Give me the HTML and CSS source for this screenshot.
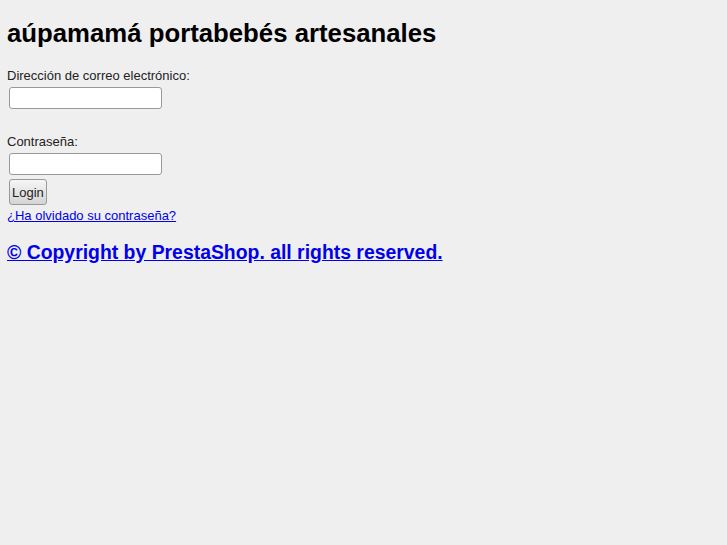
FILE: index.html
```html
<!DOCTYPE html>
<html lang="es">
<head>
  <meta charset="UTF-8">
  <title>aúpamamá portabebés artesanales</title>
  <link rel="stylesheet" href="styles.css">
</head>
<body>
<h1>aúpamamá portabebés artesanales</h1>
<form class="login-form">
  <label for="email">Dirección de correo electrónico:</label>
  <input type="text" id="email" class="field">
  <label for="passwd" class="second">Contraseña:</label>
  <input type="password" id="passwd" class="field">
  <button type="submit" class="btn">Login</button>
  <a href="#" class="forgot">¿Ha olvidado su contraseña?</a>
</form>
<h2 class="copy"><a href="#">© Copyright by PrestaShop. all rights reserved.</a></h2>
</body>
</html>
```

FILE: styles.css
```css
body {
  background: #efefef;
  margin: 7px;
  font-family: "Liberation Sans", Arial, sans-serif;
  font-size: 13px;
  color: #222;
}
h1 {
  font-size: 25.75px;
  line-height: 30px;
  font-weight: bold;
  color: #000;
  margin: 11px 0 20px;
}
.login-form label { display: block; line-height: 16px; }
.login-form .second { margin-top: 25px; }
.field {
  display: block;
  width: 153px;
  height: 22px;
  box-sizing: border-box;
  margin: 3px 2px 0;
  border: 1px solid #999;
  border-radius: 3px;
  background: #fff;
}
.btn {
  display: block;
  margin: 4px 2px 2px;
  height: 26px;
  padding: 0 2px;
  font-family: "Liberation Sans", Arial, sans-serif;
  font-size: 13px;
  color: #222;
  border: 1px solid #999;
  border-radius: 3px;
  background: linear-gradient(#f6f6f6, #d4d4d4);
}
.forgot { display: inline-block; color: #00e; line-height: 18px; }
.copy {
  font-size: 19.4px;
  line-height: 22px;
  margin: 16px 0;
}
.copy a { color: #00e; }
```
